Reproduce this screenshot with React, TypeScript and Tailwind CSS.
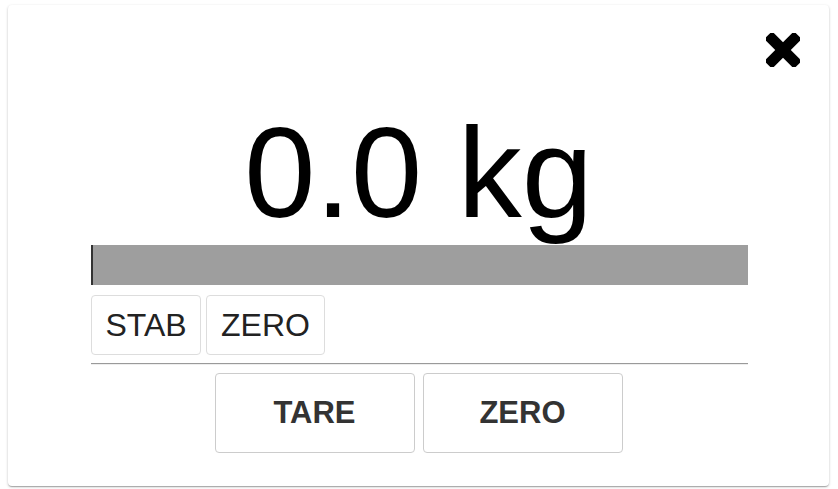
const CloseIcon = () => (
  <svg width="34" height="34" viewBox="0 0 34 34" aria-hidden="true">
    <g transform="rotate(45 17 17)" fill="#000">
      <rect x="-4" y="11.5" width="42" height="11" rx="0.8" />
      <rect x="11.5" y="-4" width="11" height="42" rx="0.8" />
    </g>
  </svg>
);

const App = () => {
  return (
    <div className="min-h-screen w-full bg-white pl-[8px] pr-[9px] pt-[5px] font-['Liberation_Sans',Arial,sans-serif] text-[#222]">
      <div className="flex h-[481px] w-[821px] flex-col rounded-[4px] bg-white shadow-[0_1px_3px_rgba(0,0,0,0.2),0_1px_1px_rgba(0,0,0,0.14),0_2px_1px_-1px_rgba(0,0,0,0.12)]">
        <div className="flex justify-end pr-[29px] pt-[28px]">
          <button type="button" className="h-[34px] w-[34px]">
            <CloseIcon />
          </button>
        </div>

        <div className="mt-[42px] text-center text-[128px] leading-[128px] text-black">
          0.0 kg
        </div>

        <div className="mx-[83px] mt-[8px] flex flex-col">
          <div className="h-[40px] w-[657px] border-l-2 border-[#333] bg-[#9e9e9e]" />

          <div className="mt-[10px] flex gap-[5px]">
            <span className="flex h-[60px] w-[110px] items-center justify-center rounded-[4px] border border-[#ddd] text-[32px]">
              STAB
            </span>
            <span className="flex h-[60px] w-[119px] items-center justify-center rounded-[4px] border border-[#ddd] text-[32px]">
              ZERO
            </span>
          </div>

          <div className="mt-[8px] h-0 w-[657px] border-t border-b border-t-[#9a9a9a] border-b-[#eee]" />

          <div className="mt-[8px] flex justify-center gap-[8px]">
            <button
              type="button"
              className="h-[80px] w-[200px] rounded-[4px] border border-[#ccc] bg-white text-[31px] font-bold text-[#333]"
            >
              TARE
            </button>
            <button
              type="button"
              className="h-[80px] w-[200px] rounded-[4px] border border-[#ccc] bg-white text-[31px] font-bold text-[#333]"
            >
              ZERO
            </button>
          </div>
        </div>
      </div>
    </div>
  );
};

export default App;
